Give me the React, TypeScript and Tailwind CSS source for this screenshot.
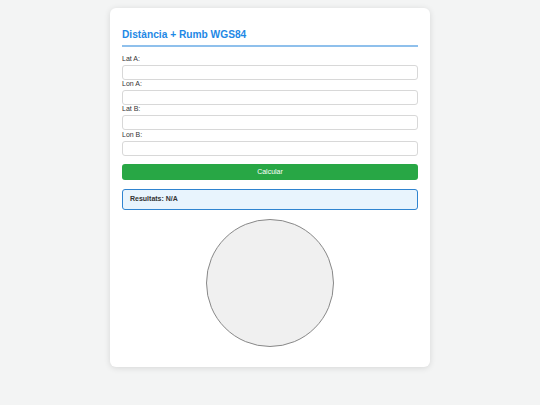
import React from 'react';

const fields = ['Lat A:', 'Lon A:', 'Lat B:', 'Lon B:'];

export default function App() {
  return (
    <div className="min-h-[405px] w-full bg-[#f3f4f4] pt-[8px]" style={{ fontFamily: '"Liberation Sans", Arial, sans-serif' }}>
      <div className="mx-auto w-[320px] rounded-[6px] bg-white px-[12px] pt-[20px] pb-[20px] shadow-[0_1px_6px_rgba(0,0,0,0.12)]">
        {/* Title */}
        <h1 className="border-b-2 border-[#8fc0ec] pb-[3px] text-[10.2px] leading-[14px] font-bold text-[#1e88e5]">
          Distància + Rumb WGS84
        </h1>

        {/* Inputs */}
        <div className="mt-[7.7px] flex flex-col gap-[0.3px]">
          {fields.map(f => (
            <div key={f} className="flex flex-col">
              <label className="block text-[7px] leading-[8px] text-[#333]">{f}</label>
              <input type="text" className="mt-[2px] h-[15px] w-full rounded-[3px] border border-[#d8d8d8] bg-white outline-none" />
            </div>
          ))}
        </div>

        <button className="mt-[8.7px] block h-[16px] w-full rounded-[3px] bg-[#28a745] text-[7px] leading-[16px] text-white">
          Calcular
        </button>

        <div className="mt-[8.7px] flex h-[21px] items-center rounded-[3px] border border-[#2f84d0] bg-[#e8f4fd] px-[7px] text-[7px] font-bold text-[#333]">
          Resultats: N/A
        </div>

        {/* Compass */}
        <div className="mt-[9px] flex justify-center">
          <div className="h-[128px] w-[128px] rounded-full border border-[#888] bg-[#f0f0f0]" />
        </div>
      </div>
    </div>
  );
}
